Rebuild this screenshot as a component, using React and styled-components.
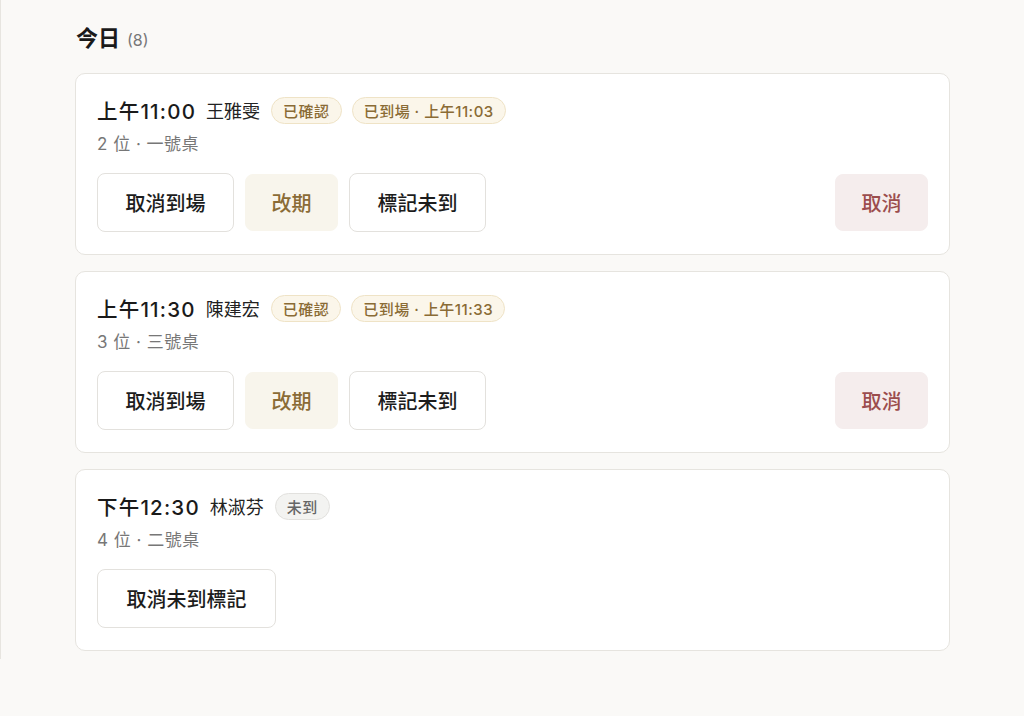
import React from "react";
import styled, { createGlobalStyle } from "styled-components";

const Global = createGlobalStyle`
  html, body { margin: 0; padding: 0; background: #faf9f7; }
  body {
    font-family: "Inter", "Noto Sans CJK TC", "Noto Sans", sans-serif;
    color: #1c1c1c;
    -webkit-font-smoothing: antialiased;
  }
`;

const Page = styled.div`
  border-left: 1px solid #e7e5e0;
  padding: 22px 74px 8px 74px;
`;

const Heading = styled.h2`
  margin: 0 0 19px 1px;
  font-size: 22px;
  line-height: 32px;
  height: 32px;
  font-weight: 600;
  color: #1a1a1a;
`;

const Count = styled.span`
  font-size: 16px;
  font-weight: 400;
  color: #777;
  margin-left: 7px;
`;

const List = styled.div`
  display: flex;
  flex-direction: column;
  gap: 16px;
`;

const Card = styled.div`
  background: #fff;
  border: 1px solid #e6e4df;
  border-radius: 10px;
  padding: 22px 21px 22px 21px;
`;

const TopRow = styled.div`
  display: flex;
  align-items: center;
  gap: 10px;
  height: 28px;
`;

const Time = styled.span`
  font-size: 20.5px;
  font-weight: 500;
  letter-spacing: 1.2px;
  color: #1a1a1a;
`;

const Name = styled.span`
  font-size: 18px;
  font-weight: 400;
  color: #222;
  margin-right: 1px;
`;

const Badge = styled.span`
  display: inline-flex;
  align-items: center;
  height: 27px;
  padding: 0 11px;
  border-radius: 14px;
  font-size: 15px;
  letter-spacing: 0.5px;
  font-weight: 500;
  box-sizing: border-box;
  background: ${(p) => (p.$tone === "gray" ? "#f3f3f1" : "#fbf6ea")};
  border: 1px solid ${(p) => (p.$tone === "gray" ? "#e2e1de" : "#efe3c6")};
  color: ${(p) => (p.$tone === "gray" ? "#666" : "#8a6b35")};
`;

const Sub = styled.div`
  margin-top: 8px;
  font-size: 17px;
  letter-spacing: 0.5px;
  line-height: 24px;
  color: #777;
`;

const Actions = styled.div`
  margin-top: 17px;
  display: flex;
  align-items: center;
  gap: 11px;
`;

const Spacer = styled.div`
  flex: 1;
`;

const variants = {
  outline: { bg: "#fff", border: "#e3e1dd", color: "#1c1c1c" },
  gold: { bg: "#f8f5ec", border: "#f8f5ec", color: "#8a6b35" },
  danger: { bg: "#f5eded", border: "#f5eded", color: "#9c4d4d" },
};

const Button = styled.button`
  font-family: inherit;
  height: ${(p) => (p.$variant === "outline" ? "59px" : "57px")};
  padding: 0 ${(p) => (p.$variant === "outline" ? "26px" : "25px")};
  min-width: ${(p) => (p.$wide ? "179px" : p.$variant === "outline" ? "137px" : "93px")};
  border-radius: 8px;
  font-size: 20px;
  font-weight: 500;
  cursor: pointer;
  background: ${(p) => variants[p.$variant].bg};
  border: 1px solid ${(p) => variants[p.$variant].border};
  color: ${(p) => variants[p.$variant].color};
`;

const items = [
  {
    time: "上午11:00",
    name: "王雅雯",
    seat: "2 位 · 一號桌",
    badges: [{ text: "已確認" }, { text: "已到場 · 上午11:03" }],
    arrived: true,
  },
  {
    time: "上午11:30",
    name: "陳建宏",
    seat: "3 位 · 三號桌",
    badges: [{ text: "已確認" }, { text: "已到場 · 上午11:33" }],
    arrived: true,
  },
  {
    time: "下午12:30",
    name: "林淑芬",
    seat: "4 位 · 二號桌",
    badges: [{ text: "未到", tone: "gray" }],
    arrived: false,
  },
];

export default function App() {
  return (
    <>
      <Global />
      <Page>
        <Heading>
          今日<Count>(8)</Count>
        </Heading>
        <List>
          {items.map((it) => (
            <Card key={it.time}>
              <TopRow>
                <Time>{it.time}</Time>
                <Name>{it.name}</Name>
                {it.badges.map((b) => (
                  <Badge key={b.text} $tone={b.tone}>
                    {b.text}
                  </Badge>
                ))}
              </TopRow>
              <Sub>{it.seat}</Sub>
              <Actions>
                {it.arrived ? (
                  <>
                    <Button $variant="outline">取消到場</Button>
                    <Button $variant="gold">改期</Button>
                    <Button $variant="outline">標記未到</Button>
                    <Spacer />
                    <Button $variant="danger">取消</Button>
                  </>
                ) : (
                  <Button $variant="outline" $wide>
                    取消未到標記
                  </Button>
                )}
              </Actions>
            </Card>
          ))}
        </List>
      </Page>
    </>
  );
}
